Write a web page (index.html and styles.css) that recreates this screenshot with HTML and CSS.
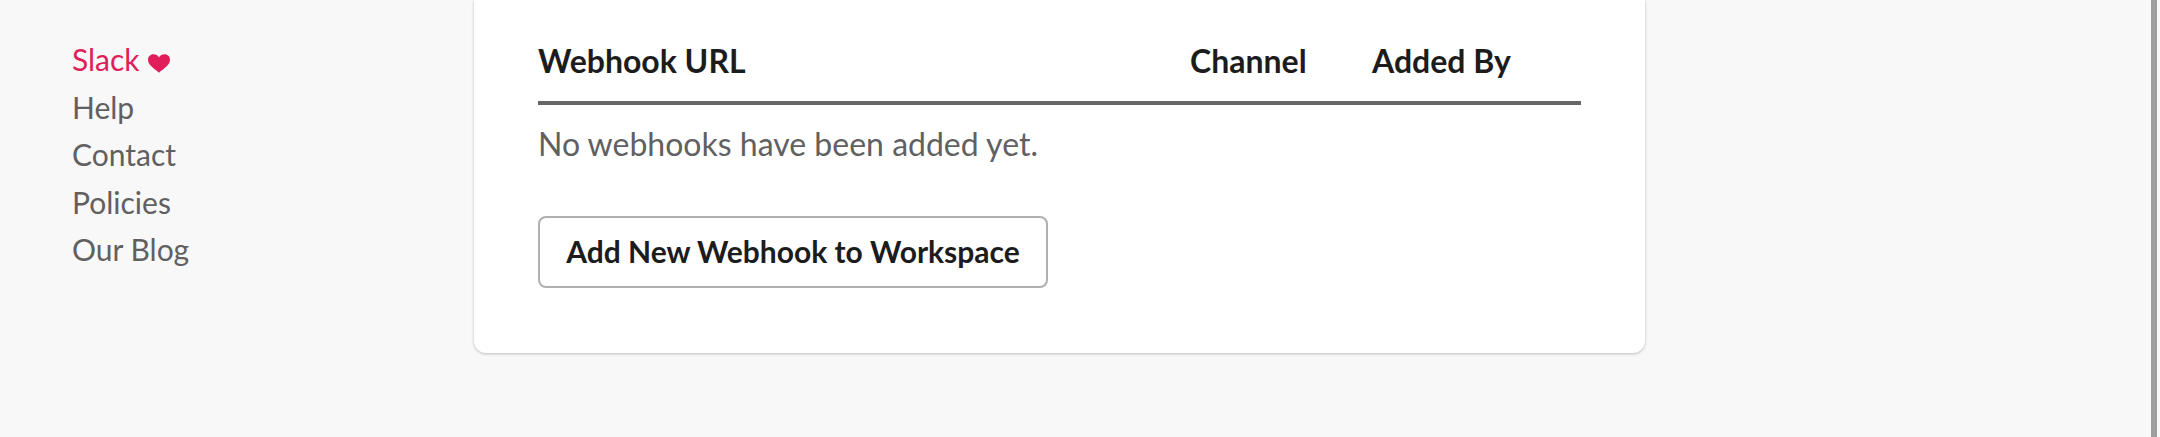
FILE: index.html
```html
<!DOCTYPE html>
<html lang="en">

<head>
    <meta charset="UTF-8">
    <meta name="viewport" content="width=device-width, initial-scale=1.0">
    <title>Incoming Webhooks</title>
    <link rel="stylesheet" href="styles.css">
</head>

<body>
    <div class="container">
        <nav class="side">
            <a class="slack" href="#">Slack
                <svg class="heart" viewBox="0 0 24 20" aria-hidden="true">
                    <path d="M12 20C9 17 0 12.500 0 6 0 2.500 2.600 0 6 0 8.600 0 10.800 1.300 12 3.400 13.200 1.300 15.400 0 18 0 21.400 0 24 2.500 24 6 24 12.500 15 17 12 20Z" />
                </svg>
            </a>
            <a href="#">Help</a>
            <a href="#">Contact</a>
            <a href="#">Policies</a>
            <a href="#">Our Blog</a>
        </nav>
        <main class="card">
            <div class="row head">
                <div class="url">Webhook URL</div>
                <div class="channel">Channel</div>
                <div class="by">Added By</div>
            </div>
            <p class="empty">No webhooks have been added yet.</p>
            <button class="btn">Add New Webhook to Workspace</button>
        </main>
    </div>
    <div class="scrollbar"></div>
</body>

</html>
```

FILE: styles.css
```css
html,
body {
    height: 100%;
}

body {
    background-color: #F8F8F8;
    margin: 0;
    padding: 0;
    font-family: Lato, "Open Sans", sans-serif;
    color: #1D1C1D;
    overflow: hidden;
}

.container {
    display: flex;
    align-items: flex-start;
}

.side {
    width: 474px;
    flex-shrink: 0;
    box-sizing: border-box;
    padding: 36px 0 0 72px;
    display: flex;
    flex-direction: column;
}

.side a {
    font-size: 30px;
    line-height: 47.600px;
    color: #616061;
    text-decoration: none;
}

.side .slack {
    color: #E01E5A;
}

.heart {
    width: 22px;
    height: 19px;
    margin-left: 1px;
    fill: #E01E5A;
    vertical-align: -2px;
}

.card {
    width: 1171px;
    box-sizing: border-box;
    height: 353px;
    padding: 39px 64px 0;
    background-color: white;
    border-radius: 0 0 12px 12px;
    box-shadow: 0 1px 3px rgba(0, 0, 0, 0.25);
}

.row {
    display: flex;
}

.head {
    font-size: 32px;
    font-weight: 700;
    line-height: 44px;
    height: 62px;
    border-bottom: 4px solid #666666;
}

.url {
    width: 652px;
}

.channel {
    width: 182px;
}

.empty {
    margin: 16px 0 0;
    font-size: 32px;
    line-height: 46px;
    color: #616061;
}

.btn {
    display: block;
    margin-top: 49px;
    width: 510px;
    height: 72px;
    padding: 0 0 2px;
    background-color: white;
    border: 2px solid #B0B0B0;
    border-radius: 8px;
    font-family: inherit;
    font-size: 30px;
    font-weight: 700;
    color: #1D1C1D;
}

.scrollbar {
    position: fixed;
    top: 0;
    bottom: 0;
    right: 3px;
    width: 6px;
    background-color: #9E9E9E;
}
```
